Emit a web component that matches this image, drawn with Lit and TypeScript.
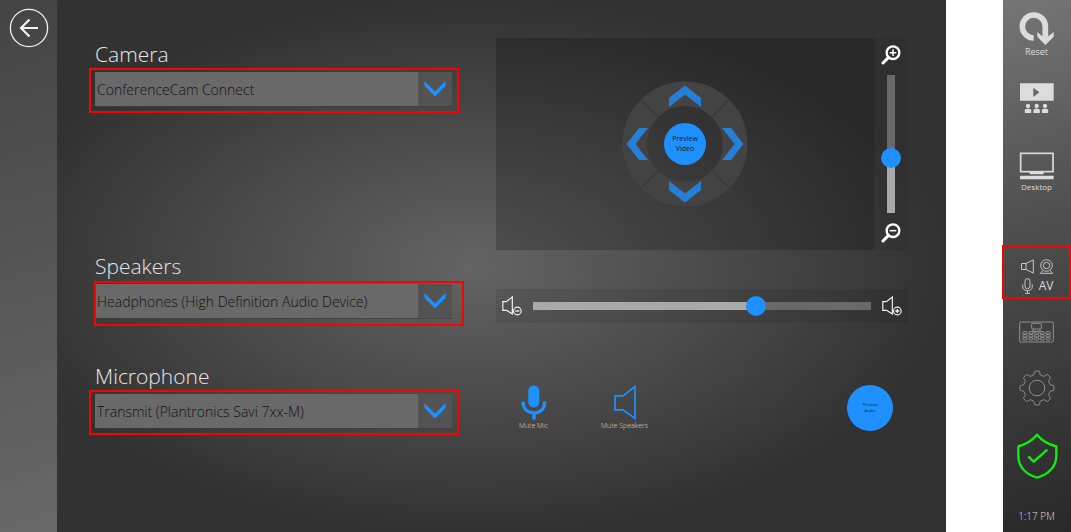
import { LitElement, html, css, svg } from "lit";
import { customElement, property, state } from "lit/decorators.js";
import { styleMap } from "lit/directives/style-map.js";

const gearPath = (cx: number, cy: number, root: number, tip: number, teeth: number): string => {
  const pt = (r: number, deg: number) => {
    const a = ((deg - 90) * Math.PI) / 180;
    return `${(cx + r * Math.cos(a)).toFixed(2)} ${(cy + r * Math.sin(a)).toFixed(2)}`;
  };
  let d = "";
  const step = 360 / teeth;
  for (let i = 0; i < teeth; i++) {
    const c = i * step;
    d += `${i ? "L" : "M"}${pt(root, c - 12)} L${pt(tip - 1, c - 10)} Q${pt(tip, c - 9)} ${pt(tip, c - 7)} `;
    d += `A${tip} ${tip} 0 0 1 ${pt(tip, c + 7)} Q${pt(tip, c + 9)} ${pt(tip - 1, c + 10)} L${pt(root, c + 12)} `;
    d += `Q${pt(root - 1.4, c + step / 2)} ${pt(root, c + step - 12)} `;
  }
  return d + "Z";
};

const seatColumns = [83, 101, 118, 135, 153];
const seatRows = [292, 301, 310];

const icons = {
  back: svg`<circle cx="20" cy="20" r="18.6" stroke-width="1.3"/><path d="M29 20H12M20.500 11.500L12 20l8.500 8.500" stroke-width="2.200"/>`,
  speaker: svg`<path d="M373 346H397L433 318V414L397 388H373Z" stroke-width="5"/>`,
};

/** Labelled drop-down with a blue chevron and a red callout frame. */
@customElement("device-field")
export class DeviceField extends LitElement {
  @property() label = "";
  @property() value = "";
  @property({ type: Boolean, reflect: true }) shifted = false;

  static styles = css`
    :host { display: block; }
    .label {
      display: block; height: 34px; line-height: 32px;
      font-size: 21px; font-weight: 300; color: #e6e6e6;
    }
    .box { position: relative; height: 34px; }
    .select {
      appearance: none; box-sizing: border-box; display: block; width: 100%; height: 34px;
      margin: 0; padding: 2px 38px 0 2px; border: 0; border-radius: 0; outline: 0;
      font: 300 14px/32px "Open Sans", "Noto Sans", sans-serif; color: #121212;
      background: linear-gradient(to left, #535353 34px, #696969 34px);
      box-shadow: 0 1px 0 rgba(60, 60, 60, 0.6);
    }
    .chevron { position: absolute; right: 6px; top: 9px; width: 22px; height: 16px; pointer-events: none; }
    .frame {
      position: absolute; inset: -4px -7px -7px -6px;
      border: 2px solid #f00; pointer-events: none;
    }
    :host([shifted]) .frame { inset: -3px -12px -8px -1px; }
  `;

  render() {
    return html`
      <label class="label" for="device">${this.label}</label>
      <div class="box">
        <select class="select" id="device"><option>${this.value}</option></select>
        <svg class="chevron" viewBox="0 0 22 16"><path d="M.5 0V5L11 15.500 21.500 5V0L11 10.500Z" fill="#1e90ff"/></svg>
        <div class="frame"></div>
      </div>
    `;
  }
}

/** Preview surface with the pan/tilt dial and the zoom slider. */
@customElement("camera-preview")
export class CameraPreview extends LitElement {
  @state() private zoom = 38;

  static styles = css`
    :host { display: flex; height: 212px; }
    button { padding: 0; border: 0; background: none; font-family: inherit; cursor: pointer; }
    svg { display: block; }
    .surface {
      flex: 1; min-width: 0; display: flex; align-items: center; justify-content: center;
      background: rgba(0, 0, 0, 0.2);
    }
    .dial {
      position: relative; box-sizing: border-box; width: 126px; height: 126px; padding: 4px;
      display: grid; grid-template: 22px 1fr 22px / 22px 1fr 22px; place-items: center;
    }
    .ring { position: absolute; inset: 0; width: 126px; height: 126px; }
    .arrow { position: relative; }
    .up { grid-area: 1 / 2; }
    .left { grid-area: 2 / 1; }
    .right { grid-area: 2 / 3; }
    .down { grid-area: 3 / 2; }
    .center {
      position: relative; grid-area: 2 / 2; width: 42px; height: 42px; border-radius: 50%;
      background: #1e90ff; color: #0b1c30; font-size: 7px; line-height: 10px;
    }
    .zoom {
      box-sizing: border-box; width: 34px; padding: 7px 0;
      display: flex; flex-direction: column; align-items: center; gap: 10px;
      background: rgba(0, 0, 0, 0.06);
    }
    .glyph { width: 20px; height: 20px; fill: none; stroke: #fff; }
    .range {
      appearance: none; writing-mode: vertical-lr; direction: rtl;
      flex: 1; min-height: 0; width: 20px; margin: 0; background: none; outline: 0;
    }
    .range::-webkit-slider-runnable-track {
      width: 8px; height: 100%;
      background: linear-gradient(to top, #a9a9a9 var(--fill), #696969 var(--fill));
    }
    .range::-webkit-slider-thumb {
      appearance: none; width: 20px; height: 20px; margin-left: -6px;
      border-radius: 50%; background: #1e90ff;
    }
  `;

  render() {
    const magnifier = svg`<circle cx="36" cy="23" r="19" stroke-width="7"/><path d="M22 38L6 54" stroke-width="9" stroke-linecap="round"/>`;
    return html`
      <div class="surface">
        <div class="dial">
          <svg class="ring" viewBox="-63 -63 126 126" fill="none">
            <circle r="50.200" stroke="#434343" stroke-width="24.600"/>
            <path d="M-44 -44L-27 -27M44 -44L27 -27M-44 44L-27 27M44 44L27 27" stroke="#2f2f2f"/>
          </svg>
          <button class="arrow up" aria-label="Tilt up">
            <svg width="32" height="22" viewBox="0 0 32 22"><path d="M16 .5L32 13v9L16 9.500 0 22v-9Z" fill="#267fd6"/></svg>
          </button>
          <button class="arrow left" aria-label="Pan left">
            <svg width="22" height="32" viewBox="0 0 22 32"><path d="M.5 16L13 0h9L9.500 16 22 32h-9Z" fill="#267fd6"/></svg>
          </button>
          <button class="center">Preview<br />Video</button>
          <button class="arrow right" aria-label="Pan right">
            <svg width="22" height="32" viewBox="0 0 22 32"><path d="M21.500 16L9 0H0l12.500 16L0 32h9Z" fill="#267fd6"/></svg>
          </button>
          <button class="arrow down" aria-label="Tilt down">
            <svg width="32" height="22" viewBox="0 0 32 22"><path d="M16 21.500L0 9V0l16 12.500L32 0v9Z" fill="#267fd6"/></svg>
          </button>
        </div>
      </div>
      <div class="zoom">
        <button aria-label="Zoom in">
          <svg class="glyph" viewBox="0 0 60 60">${magnifier}<path d="M26 23H46M36 13V33" stroke-width="4.500"/></svg>
        </button>
        <input class="range" type="range" aria-label="Zoom" .value=${String(this.zoom)}
          style=${styleMap({ "--fill": `${this.zoom}%` })}
          @input=${(e: Event) => (this.zoom = Number((e.target as HTMLInputElement).value))} />
        <button aria-label="Zoom out">
          <svg class="glyph" viewBox="0 0 60 60">${magnifier}<path d="M26 23H46" stroke-width="4.500"/></svg>
        </button>
      </div>
    `;
  }
}

/** Horizontal speaker volume strip. */
@customElement("volume-bar")
export class VolumeBar extends LitElement {
  @state() private level = 67;

  static styles = css`
    :host {
      box-sizing: border-box; display: flex; align-items: center; gap: 11px;
      height: 34px; padding: 0 6px; background: rgba(0, 0, 0, 0.08);
    }
    button { padding: 0; border: 0; background: none; cursor: pointer; }
    .glyph { display: block; width: 20px; height: 20px; fill: none; stroke: #f4f4f4; }
    .range {
      appearance: none; flex: 1; min-width: 0; height: 20px; margin: 0; background: none; outline: 0;
    }
    .range::-webkit-slider-runnable-track {
      height: 8px;
      background: linear-gradient(to right, #a9a9a9 var(--fill), #696969 var(--fill));
    }
    .range::-webkit-slider-thumb {
      appearance: none; width: 20px; height: 20px; margin-top: -6px;
      border-radius: 50%; background: #1e90ff;
    }
  `;

  render() {
    const body = svg`<path d="M31 54L14 43H2.500V17H13L31 3Z" stroke-width="3.500"/><circle cx="46" cy="45" r="11.500" stroke-width="3.500"/>`;
    return html`
      <button aria-label="Volume down">
        <svg class="glyph" viewBox="0 0 60 60">${body}<path d="M40 45H52" stroke-width="4"/></svg>
      </button>
      <input class="range" type="range" aria-label="Volume" .value=${String(this.level)}
        style=${styleMap({ "--fill": `${this.level}%` })}
        @input=${(e: Event) => (this.level = Number((e.target as HTMLInputElement).value))} />
      <button aria-label="Volume up">
        <svg class="glyph" viewBox="0 0 60 60">${body}<path d="M40 45H52M46 39V51" stroke-width="4"/></svg>
      </button>
    `;
  }
}

/** Navigation rail on the right-hand side. */
@customElement("side-rail")
export class SideRail extends LitElement {
  static styles = css`
    :host {
      box-sizing: border-box; display: flex; flex-direction: column; align-items: center;
      width: 68px; padding: 12px 1px 9px 0; color: #dcdcdc;
      background: linear-gradient(165deg, #767676, #575757 32%, #404040 62%, #292929);
    }
    button {
      display: block; padding: 0; border: 0; background: none; color: inherit;
      font: 400 8px/12px "Open Sans", "Noto Sans", sans-serif; cursor: pointer;
    }
    svg { display: block; margin: 0 auto; fill: none; }
    .reset { font-size: 9px; }
    .present { margin-top: 25px; }
    .desktop { margin-top: 38px; }
    .av {
      box-sizing: border-box; align-self: stretch; height: 54px; margin: 52px -1px 0; padding-top: 10px;
      border: 2px solid #f00; display: grid; grid-template: 19px 19px / 19px 19px;
      place-content: start center; place-items: center; font-size: 12px;
    }
    .room { margin-top: 22px; }
    .settings { margin-top: 27px; }
    .status { margin-top: 27px; }
    .time { margin-top: auto; font-size: 10px; line-height: 14px; font-weight: 300; }
  `;

  render() {
    return html`
      <button class="reset">
        <svg width="35" height="34" viewBox="72 36 105 102">
          <path d="M116 114A34.500 34.500 0 1 1 151 80V116" stroke="#dcdcdc" stroke-width="17"/>
          <path d="M127 96L151 116 176 96V110L151 135 127 110Z" fill="#dcdcdc"/>
        </svg>
        Reset
      </button>
      <button class="present" aria-label="Presentation">
        <svg width="35" height="31" viewBox="72 249 105 93">
          <path d="M75 250H176V302H75ZM115 263V291L133 277Z" fill="#dcdcdc" fill-rule="evenodd"/>
          ${[99, 125, 150].map(
            (x) => svg`<circle cx=${x} cy="318" r="6.500" fill="#dcdcdc"/><path d=${`M${x - 9.5} 339V331Q${x - 9.5} 326 ${x - 4} 326H${x + 4}Q${x + 9.5} 326 ${x + 9.5} 331V339Z`} fill="#dcdcdc"/>`,
          )}
        </svg>
      </button>
      <button class="desktop">
        <svg width="35" height="29" viewBox="72 455 105 87">
          <rect x="77" y="459" width="97" height="55" stroke="#dcdcdc" stroke-width="5"/>
          <path d="M104 515H146V522H104ZM75 526H176V537H75Z" fill="#dcdcdc"/>
        </svg>
        Desktop
      </button>
      <button class="av">
        <svg width="13" height="15" viewBox="0 0 13 15"><path d="M.5 4.500H5L12.300.9V14.100L5 10.500H.5ZM5 4.500V10.500" stroke="#c8c8c8"/></svg>
        <svg width="15" height="15" viewBox="0 0 15 15" stroke="#c8c8c8">
          <circle cx="7.500" cy="6.500" r="5.800"/><circle cx="7.500" cy="6.500" r="3.200"/>
          <path d="M3.500 11.500L1.500 14.300H13.500L11.500 11.500"/>
        </svg>
        <svg width="11" height="16" viewBox="0 0 11 16" stroke="#c8c8c8">
          <rect x="3" y=".7" width="5" height="10" rx="2.500"/>
          <path d="M.7 6.500V8.500Q.7 12.500 5.500 12.500T10.300 8.500V6.500M5.500 12.500V15.300M3 15.300H8"/>
        </svg>
        <span>AV</span>
      </button>
      <button class="room" aria-label="Room">
        <svg width="35" height="22" viewBox="72 260 105 66" stroke="#a4a4a4" stroke-width="2.400">
          <rect x="74" y="263" width="101" height="60" rx="3"/>
          <rect x="110" y="267" width="29" height="17" rx="2"/>
          <path d="M114 284V291H135V284"/>
          ${seatColumns.map((x) => seatRows.map((y) => svg`<rect x=${x} y=${y} width="13" height="7" rx="3"/>`))}
        </svg>
      </button>
      <button class="settings" aria-label="Settings">
        <svg width="36" height="36" viewBox="0 0 36 36" stroke="#8e8e8e">
          <path d=${gearPath(18, 18, 14, 17, 8)}/><circle cx="18" cy="18" r="7.800"/>
        </svg>
      </button>
      <button class="status" aria-label="Status">
        <svg width="42" height="46" viewBox="61 220 126 138" stroke="#0cf00c" stroke-width="7" stroke-linejoin="round">
          <path d="M124 225C110 242 90 254 68 260V288C68 325 95 346 124 354C153 346 182 325 182 288V260C158 254 138 242 124 225Z"/>
          <path d="M98 290L114 306 155 270" stroke-linejoin="miter"/>
        </svg>
      </button>
      <time class="time">1:17 PM</time>
    `;
  }
}

@customElement("app-root")
export class AppRoot extends LitElement {
  static styles = css`
    :host {
      display: flex; min-height: 100vh; background: #fff;
      font-family: "Open Sans", "Noto Sans", sans-serif;
    }
    button { padding: 0; border: 0; background: none; color: inherit; font-family: inherit; cursor: pointer; }
    .stage {
      flex: 1; min-width: 0; display: flex; margin-right: 57px;
      background: radial-gradient(closest-side, #646464, #323232);
    }
    .nav {
      box-sizing: border-box; width: 57px; padding-top: 8px;
      display: flex; flex-direction: column; align-items: center;
      background: linear-gradient(165deg, #444, #686868);
    }
    .back { width: 40px; height: 40px; }
    .back svg { display: block; fill: none; stroke: #f2f2f2; }
    .panel {
      flex: 1; min-width: 0; padding: 38px; display: grid; align-content: start;
      grid-template-columns: minmax(0, 357fr) minmax(0, 412fr);
      grid-template-rows: 212px 110px auto; column-gap: 44px;
    }
    .volume { margin-top: 39px; }
    .actions { display: flex; align-items: flex-start; gap: 16px; padding: 25px 15px 0 0; }
    .action { width: 75px; color: #dcdcdc; font-size: 7px; line-height: 12px; font-weight: 300; }
    .action svg { display: block; margin: 0 auto; fill: none; stroke: #1e90ff; }
    .audio {
      margin-left: auto; width: 46px; height: 46px; border-radius: 50%;
      background: #1e90ff; color: #0b1c30; font-size: 4px; line-height: 6px;
    }
  `;

  render() {
    return html`
      <main class="stage">
        <nav class="nav">
          <button class="back" aria-label="Back"><svg width="40" height="40" viewBox="0 0 40 40">${icons.back}</svg></button>
        </nav>
        <section class="panel">
          <device-field label="Camera" value="ConferenceCam Connect"></device-field>
          <camera-preview></camera-preview>
          <device-field shifted label="Speakers" value="Headphones (High Definition Audio Device)"></device-field>
          <volume-bar class="volume"></volume-bar>
          <device-field label="Microphone" value="Transmit (Plantronics Savi 7xx-M)"></device-field>
          <div class="actions">
            <button class="action">
              <svg width="26" height="35" viewBox="92 314 78 104">
                <rect x="114" y="315" width="33" height="66" rx="16" fill="#1e90ff" stroke="none"/>
                <path d="M98 363C98 388 114 397 131 397S163 388 163 363M131 397V417" stroke-width="10"/>
              </svg>
              Mute Mic
            </button>
            <button class="action">
              <svg width="26" height="35" viewBox="364 314 78 104">${icons.speaker}</svg>
              Mute Speakers
            </button>
            <button class="audio">Preview<br />Audio</button>
          </div>
        </section>
      </main>
      <side-rail></side-rail>
    `;
  }
}
